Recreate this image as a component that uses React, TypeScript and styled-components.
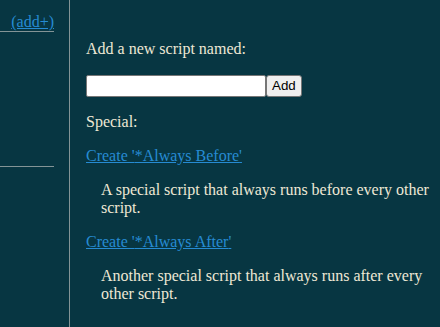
import styled, { createGlobalStyle } from "styled-components";

const GlobalStyle = createGlobalStyle`
  html, body {
    margin: 0;
    padding: 0;
    background-color: #073642;
  }

  body {
    color: #eee8d5;
    font-family: "Liberation Serif", "Times New Roman", serif;
    font-size: 16px;
  }
`;

const Page = styled.div`
  display: flex;
  min-height: 100vh;
`;

const Sidebar = styled.nav`
  flex: 0 0 54px;
  padding-right: 15px;
  border-right: 1px solid #839496;
`;

const SidebarHeader = styled.div`
  padding: 13px 0 0;
  text-align: right;
  border-bottom: 1px solid #839496;
`;

const ScriptList = styled.ul`
  height: 134px;
  margin: 0;
  padding: 0;
  list-style: none;
  border-bottom: 1px solid #839496;
`;

const Main = styled.main`
  flex: 1;
  padding: 24px 8px 0 16px;
`;

const Text = styled.p`
  margin: 16px 0;
`;

const Description = styled.p`
  margin: 16px 0;
  padding-left: 15px;
`;

const TextLink = styled.a`
  color: #268bd2;
  text-decoration: underline;
  cursor: pointer;
`;

const NewScriptForm = styled.form`
  display: flex;
  align-items: center;
  height: 23px;
  margin: 16px 0;
`;

const NameInput = styled.input`
  box-sizing: border-box;
  width: 180px;
  height: 22px;
  margin: 0;
  padding: 1px 2px;
  border: 1px solid #767676;
  border-radius: 2px;
  background: #ffffff;
  font-family: "Liberation Sans", Arial, sans-serif;
  font-size: 13.33px;
`;

const AddButton = styled.button`
  box-sizing: border-box;
  height: 22px;
  margin: 0;
  padding: 0 5px;
  border: 1px solid #767676;
  border-radius: 3px;
  background: #efefef;
  color: #000000;
  font-family: "Liberation Sans", Arial, sans-serif;
  font-size: 13.33px;
`;

interface ISpecialScript {
  name: string;
  description: string;
}

const specials: ISpecialScript[] = [
  {
    name: "*Always Before",
    description: "A special script that always runs before every other script.",
  },
  {
    name: "*Always After",
    description: "Another special script that always runs after every other script.",
  },
];

function App() {
  return (
    <>
      <GlobalStyle />
      <Page>
        <Sidebar>
          <SidebarHeader>
            <TextLink>(add+)</TextLink>
          </SidebarHeader>
          <ScriptList />
        </Sidebar>
        <Main>
          <Text>Add a new script named:</Text>
          <NewScriptForm onSubmit={(e) => e.preventDefault()}>
            <NameInput type="text" />
            <AddButton type="submit">Add</AddButton>
          </NewScriptForm>
          <Text>Special:</Text>
          {specials.map((s) => (
            <div key={s.name}>
              <Text>
                <TextLink>Create '{s.name}'</TextLink>
              </Text>
              <Description>{s.description}</Description>
            </div>
          ))}
        </Main>
      </Page>
    </>
  );
}

export default App;
